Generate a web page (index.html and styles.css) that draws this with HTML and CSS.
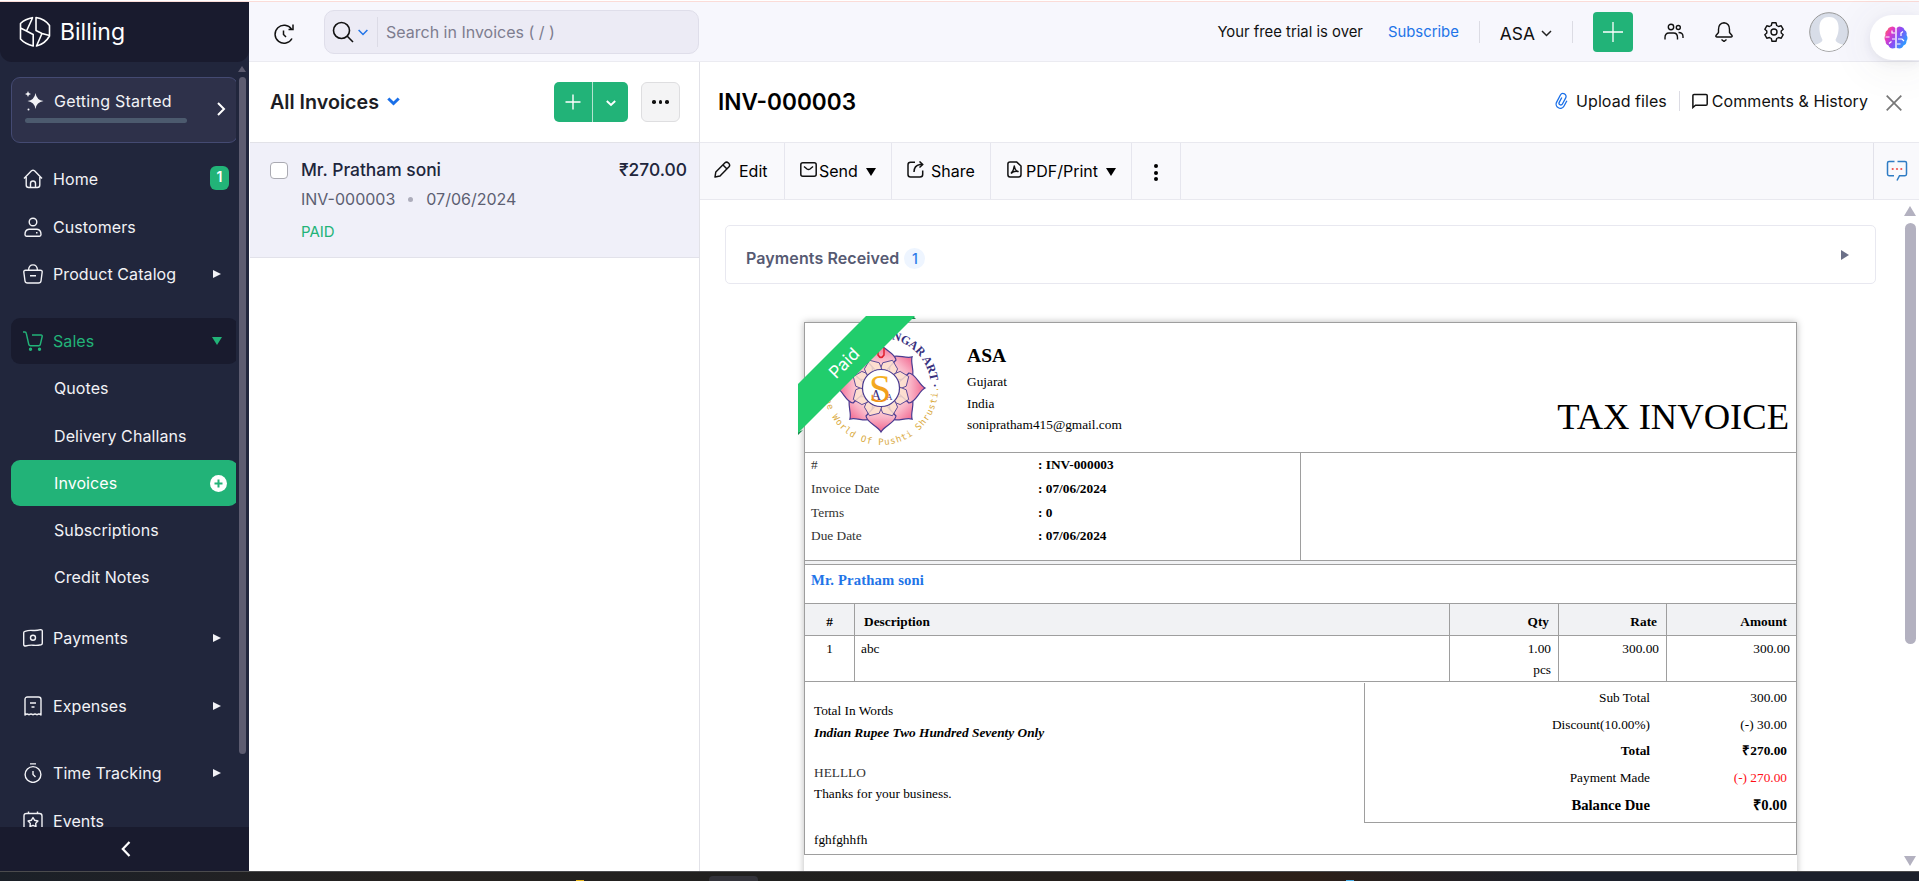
FILE: index.html
```html
<!DOCTYPE html>
<html lang="en">
<head>
<meta charset="utf-8">
<title>Billing - Invoices</title>
<link rel="stylesheet" href="styles.css">
</head>
<body>
<div class="topline"></div>
<div class="app">
  <aside class="sidebar">
    <div class="brand">
      <svg width="32" height="32" viewBox="0 0 32 32" fill="none" stroke="#fff" stroke-width="1.6" stroke-linejoin="round"><path d="M14.200 1.500 Q6 3 1.500 7.500 V23 Q6 28 14.200 30 V18.500 L7.500 15 L13.500 2 M1.500 12 L7.500 15"/><path d="M17 1.500 Q26 3 30.500 9.500 V20 Q26 28 17.500 30 L23 17.500 L17 14.500 Z M23 17.500 L30.500 19.500"/></svg>
      <span>Billing</span>
    </div>
    <div class="nav-wrap">
      <nav class="nav">
        <div class="start-card">
          <svg width="20" height="20" viewBox="0 0 20 20" fill="#f2f2f6"><path d="M10.500 2 Q11.500 9 18.500 10 Q11.500 11 10.500 18 Q9.500 11 2.500 10 Q9.500 9 10.500 2Z"/><path d="M3 0 Q3.300 2.700 6 3 Q3.300 3.300 3 6 Q2.700 3.300 0 3 Q2.700 2.700 3 0Z"/><circle cx="3.500" cy="18.500" r="1"/></svg>
          <div class="start-main"><span>Getting Started</span></div>
          <svg class="start-arrow" width="10" height="14" viewBox="0 0 10 14" fill="none" stroke="#fff" stroke-width="2"><path d="M2 1 L8 7 L2 13"/></svg>
          <div class="progress"></div>
        </div>
        <a class="item g13"><svg viewBox="0 0 20 20"><path d="M1 9.500 L8.500 1.800 Q10 .700 11.500 1.800 L19 9.500 M3.200 8 V16 Q3.200 18.500 5.700 18.500 H14.300 Q16.800 18.500 16.800 16 V8 M7.500 18.500 V14.500 Q7.500 12 10 12 Q12.500 12 12.500 14.500 V18.500"/></svg>Home<b class="count">1</b></a>
        <a class="item g2"><svg viewBox="0 0 20 20"><circle cx="10" cy="5" r="3.800"/><path d="M6 12.200 H14 Q18 12.500 18 17.500 Q18 19.200 16.500 19.200 H3.500 Q2 19.200 2 17.500 Q2 12.500 6 12.200Z M13 15.800 H14.500"/></svg>Customers</a>
        <a class="item g1"><svg viewBox="0 0 20 20"><path d="M2.500 6.200 H17.500 Q19.300 6.200 19.200 8 L18 17 Q17.700 19 15.500 19 H4.500 Q2.300 19 2 17 L.800 8 Q.700 6.200 2.500 6.200Z M5.500 6 Q6 .900 10 .900 Q14 .900 14.500 6 M7 11.800 H13"/></svg>Product Catalog<i class="tri"></i></a>
        <a class="item open g21"><svg viewBox="0 0 20 20"><path d="M0 1 H2 Q3 1 3.300 2.500 L5.800 13.500 Q6.100 14.700 7.500 14.700 H15.800 Q17 14.700 17.300 13.500 L19.200 5.500 Q19.400 4 18 4 H9"/><circle cx="7.500" cy="18.200" r="1" fill="currentColor"/><circle cx="16.500" cy="18.200" r="1" fill="currentColor"/></svg>Sales<i class="tri down"></i></a>
        <a class="item sub g1">Quotes</a>
        <a class="item sub g2">Delivery Challans</a>
        <a class="item sub active g1">Invoices<svg class="add" viewBox="0 0 17 17"><circle cx="8.500" cy="8.500" r="8.500" fill="#fff" stroke="none"/><path d="M8.500 4.500 V12.500 M4.500 8.500 H12.500" stroke="#22b378" stroke-width="2"/></svg></a>
        <a class="item sub g1">Subscriptions</a>
        <a class="item sub g1">Credit Notes</a>
        <a class="item g15"><svg viewBox="0 0 20 20"><path d="M2 3.300 Q6 2 10 2.500 Q14 2.800 17.500 1.700 Q19.300 1.500 19.300 3.200 V15.300 Q19.300 16.500 18 16.800 Q14 17.600 10 17.200 Q6 17 2.500 18 Q.700 18 .700 16.500 V4.800 Q.700 3.700 2 3.300Z"/><circle cx="10" cy="9.800" r="2.500"/></svg>Payments<i class="tri"></i></a>
        <a class="item g22"><svg viewBox="0 0 20 20"><path d="M2 19 V3.500 Q2 1 4.500 1 H15.500 Q18 1 18 3.500 V19 Q16 17 14 18.800 Q12 17 10 18.800 Q8 17 6 18.800 Q4 17 2 19Z M7 7 H13 M8.500 11 H11.500"/></svg>Expenses<i class="tri"></i></a>
        <a class="item g21"><svg viewBox="0 0 20 20"><circle cx="10" cy="11.500" r="7.900"/><path d="M7 .900 H13 M10 8 V11.500 L12.500 14"/></svg>Time Tracking<i class="tri"></i></a>
        <a class="item g2"><svg viewBox="0 0 20 20"><path d="M3.500 2.500 H16.500 Q19 2.500 19 5 V17 Q19 19 16.500 19 H3.500 Q1 19 1 17 V5 Q1 2.500 3.500 2.500Z M5.500 .500 V3 M14.500 .500 V3 M10 6.500 L11.700 9.300 L14.900 10 L12.700 12.400 L13 15.600 L10 14.300 L7 15.600 L7.300 12.400 L5.100 10 L8.300 9.300Z"/></svg>Events</a>
      </nav>
      <div class="side-scroll"><i class="side-up"></i><i class="side-thumb"></i></div>
    </div>
    <div class="collapse"><svg width="10" height="16" viewBox="0 0 10 16" fill="none" stroke="#fff" stroke-width="2.200"><path d="M8.500 1 L1.800 8 L8.500 15"/></svg></div>
  </aside>

  <div class="main">
    <header class="header">
      <svg class="recent" width="22" height="22" viewBox="0 0 22 22" fill="none" stroke="#111" stroke-width="1.500"><path d="M19 15.500 A9 9 0 1 1 18.500 6.200 M20 1.500 V6.500 H15.500 M10.500 7.500 V11.500 L13 14"/></svg>
      <div class="search">
        <svg width="22" height="22" viewBox="0 0 22 22" fill="none" stroke="#111" stroke-width="1.600"><circle cx="9.500" cy="9.500" r="8"/><path d="M15.300 15.300 L21 21"/></svg>
        <svg class="s-chev" width="10" height="7" viewBox="0 0 10 7" fill="none" stroke="#2274e8" stroke-width="1.500"><path d="M.600 1 L5 5.500 L9.400 1"/></svg>
        <span class="search-text">Search in Invoices ( / )</span>
      </div>
      <div class="head-right">
        <span class="trial">Your free trial is over</span>
        <a class="subscribe">Subscribe</a>
        <i class="vr"></i>
        <span class="org">ASA<svg width="11" height="7" viewBox="0 0 11 7" fill="none" stroke="#222" stroke-width="1.500"><path d="M1 1 L5.500 5.500 L10 1"/></svg></span>
        <i class="vr"></i>
        <span class="plus-btn"><svg width="20" height="20" viewBox="0 0 20 20" stroke="#fff" stroke-width="1.300"><path d="M10 0 V20 M0 10 H20"/></svg></span>
        <svg class="hi users" viewBox="0 0 20 20"><circle cx="7" cy="5" r="2.700"/><circle cx="14.300" cy="5.500" r="2"/><path d="M1 17.500 V15.500 Q1 11 5 11 H9.500 Q13.500 11 13.500 15.500 V17.500 M14.500 10.500 Q19 10.500 19 14.500 V16"/></svg>
        <svg class="hi bell" viewBox="0 0 20 20"><path d="M10 .800 Q15.500 1.300 15.500 7.500 V10.500 L18 13.500 Q18.500 15 17 15 H3 Q1.500 15 2 13.500 L4.500 10.500 V7.500 Q4.500 1.300 10 .800Z M7.500 17.500 L10 19.500 L12.500 17.500"/></svg>
        <svg class="hi gear" viewBox="0 0 20 20"><path d="M8 .800 H12 L12.700 3.500 L14.500 4.500 L17.200 3.800 L19.200 7.300 L17.200 9 V11 L19.200 12.700 L17.200 16.200 L14.500 15.500 L12.700 16.500 L12 19.200 H8 L7.300 16.500 L5.500 15.500 L2.800 16.200 L.800 12.700 L2.800 11 V9 L.800 7.300 L2.800 3.800 L5.500 4.500 L7.300 3.500Z"/><circle cx="10" cy="10" r="3"/></svg>
        <svg class="avatar" width="40" height="40" viewBox="0 0 40 40"><defs><clipPath id="av"><circle cx="20" cy="20" r="19"/></clipPath></defs><circle cx="20" cy="20" r="19.300" fill="#d8dde8" stroke="#999" stroke-width="1"/><path clip-path="url(#av)" fill="#fff" d="M20 5 C28 5 30 11 29.500 18 C29 24 27 26 26.500 28 Q27 31 35 33 V40 H5 V33 Q13 31 13.500 28 C13 26 11 24 10.500 18 C10 11 12 5 20 5Z"/></svg>
      </div>
    </header>

    <div class="body">
      <section class="list">
        <div class="list-head">
          <h2>All Invoices</h2>
          <svg class="lh-chev" width="13" height="9" viewBox="0 0 13 9" fill="none" stroke="#1a6fe8" stroke-width="3"><path d="M1.300 1.500 L6.500 6.500 L11.700 1.500"/></svg>
          <div class="split"><span class="sp-a"><svg width="16" height="16" viewBox="0 0 16 16" stroke="#fff" stroke-width="1.400"><path d="M8 .500 V15.500 M.500 8 H15.500"/></svg></span><span class="sp-b"><svg width="10" height="7" viewBox="0 0 10 7" fill="none" stroke="#fff" stroke-width="1.900"><path d="M.800 1 L5 5 L9.200 1"/></svg></span></div>
          <span class="more"><i></i><i></i><i></i></span>
        </div>
        <div class="row">
          <i class="check"></i>
          <div class="row-main">
            <div class="r1"><span>Mr. Pratham soni</span><span>₹270.00</span></div>
            <div class="r2"><span>INV-000003</span><i></i><span>07/06/2024</span></div>
            <div class="r3">PAID</div>
          </div>
        </div>
      </section>

      <section class="detail">
        <div class="d-head">
          <h1>INV-000003</h1>
          <div class="d-links">
            <svg width="14" height="18" viewBox="0 0 14 18" fill="none" stroke="#1a6fe8" stroke-width="1.300"><g transform="rotate(28 7 9)"><path d="M5.200 6 V11.500 A1.800 1.800 0 0 0 8.800 11.500 V4.500 A3 3 0 0 0 2.800 4.500 V12.500 A4.200 4.200 0 0 0 11.200 12.500 V6.500"/></g></svg>
            <span class="up">Upload files</span>
            <i class="vr2"></i>
            <svg class="cm" width="16" height="16" viewBox="0 0 16 16" fill="none" stroke="#111" stroke-width="1.500"><path d="M.900 14.500 V2.500 Q.900 1.500 2 1.500 H14 Q15.200 1.500 15.200 2.500 V11 Q15.200 12.300 14 12.300 H3.500Z"/></svg>
            <span class="ch">Comments &amp; History</span>
            <svg class="close" width="16" height="16" viewBox="0 0 16 16" stroke="#777" stroke-width="1.700"><path d="M.700 .700 L15.300 15.300 M15.300 .700 L.700 15.300"/></svg>
          </div>
        </div>
        <div class="toolbar">
          <span class="tb t-edit"><svg width="17" height="17" viewBox="0 0 17 17"><path d="M1 16 L1.800 11 L11 1.800 Q12.500 .300 14.500 2 Q16.500 4 15 5.800 L6 15 Z M9 4 L13 8"/></svg>Edit</span>
          <span class="tb t-send"><svg width="17" height="15" viewBox="0 0 17 15"><rect x=".8" y=".8" width="15.400" height="13.400" rx="2"/><path d="M4 4.500 L7 7 Q8.500 8 10 7 L13 4.500"/></svg>Send<i class="dn"></i></span>
          <span class="tb t-share"><svg width="17" height="17" viewBox="0 0 17 17"><path d="M8 1.200 H3.500 Q1 1.200 1 3.700 V13.500 Q1 16 3.500 16 H13 Q15.700 16 15.700 13.500 V9.500 M7 11 Q7 4.500 13 3.500 H15.500 M12.500 .500 L15.800 3.500 L12.500 6.500"/></svg>Share</span>
          <span class="tb t-pdf"><svg width="15" height="17" viewBox="0 0 15 17"><path d="M3 .900 H9.500 L14 5 V13.500 Q14 16 11.500 16 H3 Q.900 16 .900 13.500 V3 Q.900 .900 3 .900Z M4 12.500 Q7 9 7.300 5 Q8 9.500 11 10.500 Q7 9.500 4 12.500"/></svg>PDF/Print<i class="dn"></i></span>
          <span class="tb t-more"><i></i><i></i><i></i></span>
          <span class="t-chat"><svg width="22" height="22" viewBox="0 0 22 22" fill="none" stroke="#2f7cc4" stroke-width="1.500"><path d="M8.500 1.500 H3 Q1.500 1.500 1.500 3 V14 Q1.500 15.700 3 15.700 H8 M11.500 1.500 H19 Q20.500 1.500 20.500 3 V14 Q20.500 15.700 19 15.700 H13.500 L11 20.500"/><g fill="#f0524f" stroke="none"><circle cx="6.700" cy="9" r="1.100"/><circle cx="11" cy="9" r="1.100"/><circle cx="15.300" cy="9" r="1.100"/></g></svg></span>
        </div>
        <div class="view">
          <div class="view-main">
            <div class="pay"><span>Payments Received</span><b>1</b><i></i></div>
            <div class="paper">
              <div class="inv">
                <div class="inv-top">
                  <svg class="logo" width="124" height="124" viewBox="-62 -62 124 124">
                    <defs>
                      <linearGradient id="pk" x1="0" y1="0" x2="0" y2="1"><stop offset="0" stop-color="#f2668f"/><stop offset=".55" stop-color="#f9b3c6"/><stop offset="1" stop-color="#fde4dc"/></linearGradient>
                      <linearGradient id="gd" x1="0" y1="0" x2="0" y2="1"><stop offset="0" stop-color="#f7c22a"/><stop offset="1" stop-color="#ee8412"/></linearGradient>
                      <path id="petal" d="M0 -44 C-3 -38 -14 -35 -15 -28 Q-11 -24 -6 -18 H6 Q11 -24 15 -28 C14 -35 3 -38 0 -44Z" fill="url(#pk)" stroke="#4a3a90" stroke-width="1.200"/>
                      <path id="inner" d="M0 -30 L-8 -24 L-8 -17 H8 L8 -24Z" fill="#fde0cf" fill-opacity=".85" stroke="#4a3a90" stroke-width=".8"/>
                      <path id="arc1" d="M-50 0 A50 50 0 0 1 50 0 A50 50 0 0 1 43.300 25"/>
                      <path id="arc2" d="M-57 0 A57 57 0 0 0 57 0 A57 57 0 0 0 55 -15"/>
                    </defs>
                    <use href="#petal" transform="rotate(45)"/><use href="#petal" transform="rotate(135)"/><use href="#petal" transform="rotate(225)"/><use href="#petal" transform="rotate(315)"/>
                    <use href="#petal"/><use href="#petal" transform="rotate(90)"/><use href="#petal" transform="rotate(180)"/><use href="#petal" transform="rotate(270)"/>
                    <use href="#inner" transform="rotate(22.500)"/><use href="#inner" transform="rotate(67.500)"/><use href="#inner" transform="rotate(112.500)"/><use href="#inner" transform="rotate(157.500)"/><use href="#inner" transform="rotate(202.500)"/><use href="#inner" transform="rotate(247.500)"/><use href="#inner" transform="rotate(292.500)"/><use href="#inner" transform="rotate(337.500)"/>
                    <path d="M-3 -40 V-33 Q0 -28 3 -33 V-40" fill="none" stroke="#e01f2d" stroke-width="1.500"/>
                    <circle r="18.500" fill="#fff" stroke="#4a3a90" stroke-width="1.200"/>
                    <text class="lg-a" x="-5" y="12" font-size="14">A</text><text class="lg-a" x="5" y="12" font-size="9">A</text>
                    <text class="lg-s" x="-1" y="14" font-size="40" fill="url(#gd)">S</text>
                    <text class="lg-top"><textPath href="#arc1" startOffset="89">NGAR ART ·</textPath></text>
                    <text class="lg-bot"><textPath href="#arc2" startOffset="5">The World Of Pushti Shrusti.</textPath></text>
                  </svg>
                  <div class="org-info"><b>ASA</b><span>Gujarat</span><span>India</span><span>sonipratham415@gmail.com</span></div>
                  <div class="tax">TAX INVOICE</div>
                </div>
                <div class="meta">
                  <div class="meta-l">
                    <span>#</span><b>: INV-000003</b>
                    <span>Invoice Date</span><b>: 07/06/2024</b>
                    <span>Terms</span><b>: 0</b>
                    <span>Due Date</span><b>: 07/06/2024</b>
                  </div>
                </div>
                <div class="gap"></div>
                <div class="cust">Mr. Pratham soni</div>
                <div class="cols thead"><span class="c">#</span><span class="l">Description</span><span>Qty</span><span>Rate</span><span>Amount</span></div>
                <div class="cols tbody"><span class="c">1</span><span class="l">abc</span><span>1.00<br>pcs</span><span>300.00</span><span>300.00</span></div>
                <div class="bottom">
                  <div class="notes">
                    <p>Total In Words</p><p class="words">Indian Rupee Two Hundred Seventy Only</p>
                    <p class="hello">HELLLO</p><p>Thanks for your business.</p><p class="terms">fghfghhfh</p>
                  </div>
                  <div class="totals">
                    <span>Sub Total</span><span>300.00</span>
                    <span>Discount(10.00%)</span><span>(-) 30.00</span>
                    <b>Total</b><b>₹270.00</b>
                    <span>Payment Made</span><span class="red">(-) 270.00</span>
                    <b class="big">Balance Due</b><b class="big">₹0.00</b>
                  </div>
                </div>
              </div>
              <div class="ribbon"><svg width="120" height="120" viewBox="0 0 120 120"><path d="M115 0 L118 3 H112Z M0 116 L0 119 L5 114Z" fill="#16894a"/><path d="M68 0 H117 L0 117 V68Z" fill="#21cd6c"/><text x="46" y="53" transform="rotate(-45 46 47)">Paid</text></svg></div>
            </div>
          </div>
          <div class="v-scroll"><i class="v-up"></i><i class="v-thumb"></i><i class="v-down"></i></div>
        </div>
      </section>
    </div>
    <div class="float"><svg width="24" height="23" viewBox="0 0 24 23"><defs><linearGradient id="br" x1="0" y1="0" x2="1" y2=".6"><stop offset="0" stop-color="#ff7a3c"/><stop offset=".3" stop-color="#e838c0"/><stop offset=".6" stop-color="#8a4df5"/><stop offset="1" stop-color="#2f9bff"/></linearGradient></defs><path fill="url(#br)" d="M11.300 2 Q9.500 -.500 6.500 1 Q4 1.500 3.500 4 Q.500 5.500 1.500 9 Q-.500 12 1.500 15 Q1.500 18.500 4.500 19.500 Q6 23.500 11.300 22Z M12.700 2 Q14.500 -.500 17.500 1 Q20 1.500 20.500 4 Q23.500 5.500 22.500 9 Q24.500 12 22.500 15 Q22.500 18.500 19.500 19.500 Q18 23.500 12.700 22Z"/><path d="M11 7 H8 V4.500 M1.500 11 H5.500 M11 13 H8 M5 17.500 L7.500 15.500 M14 13 H18 L20 15 M16.500 7.500 L19 5.500 M13 18 H16.500 M17 7.500 V10" fill="none" stroke="#fff" stroke-width="1.200"/></svg></div>
  </div>
</div>
<div class="taskbar"><i class="tk y"></i><i class="tab"></i><i class="tk b"></i></div>
</body>
</html>
```

FILE: styles.css
```css
* { box-sizing: border-box; }
body { margin: 0; width: 1919px; height: 881px; overflow: hidden; display: flex; flex-direction: column; background: #fff; font-family: Inter, "Liberation Sans", sans-serif; font-size: 16px; color: #111; }
h1, h2, p { margin: 0; }
i { font-style: normal; }
svg { flex: none; display: block; }
.topline { height: 2px; flex: none; background: linear-gradient(#fff 1px, #fbdcd8 1px); }
.app { display: flex; height: 869px; flex: none; }

/* sidebar */
.sidebar { width: 249px; flex: none; background: #21263c; display: flex; flex-direction: column; }
.brand { height: 60px; flex: none; background: #191b2e; border-radius: 0 0 12px 12px; display: flex; align-items: center; gap: 9px; padding: 0 0 0 19px; color: #fff; font-size: 23px; }
.nav-wrap { flex: 1; min-height: 0; display: flex; justify-content: space-between; }
.nav { width: 236px; padding: 15px 0 0 11px; overflow: hidden; height: 765px; letter-spacing: .08px; }
.start-card { width: 227px; height: 66px; border: 1px solid #444a72; border-radius: 9px; background: #2e314a; display: grid; grid-template-columns: 20px 1fr 10px; column-gap: 10px; padding: 13px 11px 0 13px; color: #f2f2f6; align-content: start; }
.start-main { height: 20px; line-height: 20px; margin-left: -1px; letter-spacing: .25px; white-space: nowrap; }
.start-arrow { margin-top: 11px; }
.progress { grid-column: 1 / 4; width: 162px; height: 5px; border-radius: 3px; background: #4c5a6e; margin-top: 2px; }
.item { width: 227px; height: 46px; display: flex; align-items: center; padding-left: 12px; color: #f2f2f6; border-radius: 9px; }
.item svg { width: 20px; height: 20px; margin-right: 10px; fill: none; stroke: currentColor; stroke-width: 1.4; stroke-linejoin: round; }
.item.open { background: #191b2e; color: #22b378; }
.item.sub { padding-left: 43px; }
.item.active { background: #22b378; color: #fff; }
.item svg.add { width: 17px; height: 17px; margin: 0 11px 0 auto; }
.g1 { margin-top: 1px; } .g2 { margin-top: 2px; } .g13 { margin-top: 13px; } .g15 { margin-top: 15px; } .g21 { margin-top: 21px; } .g22 { margin-top: 22px; }
.count { margin: -2px 9px 0 auto; width: 19px; height: 24px; border-radius: 6px; background: #22b378; color: #fff; font-size: 14px; font-weight: 600; text-align: center; line-height: 22px; }
.tri { margin: 0 17px 0 auto; border-left: 8px solid #f2f2f6; border-top: 4.5px solid transparent; border-bottom: 4.5px solid transparent; }
.tri.down { margin-right: 16px; border-left: 5px solid transparent; border-right: 5px solid transparent; border-top: 8px solid #22b378; border-bottom: 0; }
.side-scroll { width: 11px; padding-top: 4px; display: flex; flex-direction: column; align-items: flex-start; }
.side-up { border-left: 4.5px solid transparent; border-right: 4.5px solid transparent; border-bottom: 6px solid #5d5c70; }
.side-thumb { width: 7px; height: 677px; margin: 5px 0 0 1px; border-radius: 4px; background: #5d5c70; }
.collapse { height: 44px; flex: none; background: #191b2e; display: flex; align-items: center; justify-content: center; padding-left: 3px; }

/* header */
.main { flex: 1; min-width: 0; position: relative; display: flex; flex-direction: column; padding-left: 1px; }
.header { height: 60px; flex: none; margin-left: -1px; background: #f7f7fd; border-bottom: 1px solid #ebebf1; display: flex; align-items: center; }
.recent { margin: 4px 0 0 24px; }
.search { width: 375px; height: 44px; margin-left: 29px; margin-top: 1px; border: 1px solid #dfdeea; border-radius: 10px; background: #ecebf5; display: flex; align-items: center; padding-left: 7px; }
.s-chev { margin: 0 9px 0 4px; }
.search-text { height: 30px; line-height: 30px; border-left: 1px solid #dcdbe6; padding-left: 8px; color: #7e7d8f; }
.head-right { margin-left: auto; padding-right: 70px; display: flex; align-items: center; font-size: 14.850px; white-space: nowrap; }
.trial { margin-right: 25px; }
.subscribe { color: #2274e8; margin-right: 20px; }
.vr { width: 1px; height: 22px; background: #dcdce4; margin-right: 20px; }
.org { font-size: 17.400px; display: flex; align-items: center; gap: 6px; margin: 4px 20px 0 0; }
.plus-btn { width: 40px; height: 40px; border-radius: 4px; background: #22b378; display: flex; align-items: center; justify-content: center; margin-right: 31px; }
.hi { width: 20px; height: 20px; fill: none; stroke: #111; stroke-width: 1.4; stroke-linejoin: round; margin-right: 30px; }
.gear { margin-right: 25px; }
.float { position: absolute; right: 0; top: 13px; width: 49px; height: 45px; border-radius: 22px 0 0 22px; background: #fff; box-shadow: 0 4px 40px 8px rgba(60,60,90,.06), 0 3px 10px rgba(60,60,90,.08); padding: 11px 0 0 14px; }

.body { flex: 1; min-height: 0; display: flex; }
/* list */
.list { width: 450px; flex: none; border-right: 1px solid #e2e2e8; }
.list-head { height: 81px; border-bottom: 1px solid #e2e2e8; display: flex; align-items: center; padding-left: 20px; }
h2 { font-size: 19.700px; font-weight: 600; color: #1c1d24; white-space: nowrap; margin-top: -1px; }
.lh-chev { margin: -1px 0 0 8px; }
.split { margin-left: auto; display: flex; width: 74px; height: 40px; border-radius: 5px; background: #22b378; }
.sp-a, .sp-b { display: flex; align-items: center; justify-content: center; }
.sp-a { width: 39px; border-right: 1px solid #b4e3d0; }
.sp-b { flex: 1; padding-top: 2px; }
.more { width: 39px; height: 40px; margin: 0 19px 0 13px; border: 1px solid #dedee0; border-radius: 6px; background: #f4f4f5; display: flex; align-items: center; justify-content: center; gap: 3px; }
.more i { width: 3.500px; height: 3.500px; border-radius: 50%; background: #111; }
.row { height: 115px; background: #f0f0f9; border-bottom: 1px solid #e2e2ea; display: flex; padding: 16px 12px 0 20px; }
.check { width: 18px; height: 17px; margin-top: 3px; border: 1px solid #aaaab2; border-radius: 4px; background: #fff; }
.row-main { flex: 1; margin-left: 13px; }
.r1 { display: flex; justify-content: space-between; font-size: 17.400px; font-weight: 500; line-height: 22px; color: #21263c; }
.r2 { display: flex; align-items: center; line-height: 20px; margin-top: 8px; color: #5c5f72; }
.r2 i { width: 5px; height: 5px; border-radius: 50%; background: #adadbb; margin: 0 13px; }
.r3 { font-size: 15px; line-height: 20px; margin-top: 13px; color: #22b378; }

/* detail */
.detail { flex: 1; min-width: 0; display: flex; flex-direction: column; }
.d-head { height: 80px; flex: none; display: flex; align-items: center; justify-content: space-between; padding: 0 17px 2px 18px; }
h1 { font-size: 22.600px; font-weight: 600; color: #000; }
.d-links { display: flex; align-items: center; white-space: nowrap; letter-spacing: .06px; }
.up { margin: 0 12px 0 7px; }
.vr2 { width: 1px; height: 20px; background: #dcdce4; }
.cm { margin: 0 4px 0 12px; }
.close { margin-left: 18px; margin-top: 3px; }
.toolbar { height: 58px; flex: none; border-top: 1px solid #e9e9ef; border-bottom: 1px solid #e9e9ef; background: #f9f9fc; display: flex; }
.tb { border-right: 1px solid #e6e6ee; display: flex; align-items: center; color: #000; }
.tb svg { fill: none; stroke: #111; stroke-width: 1.5; stroke-linejoin: round; margin-top: -3px; }
.t-edit { width: 85px; padding-left: 14px; } .t-edit svg { margin-right: 8px; }
.t-send { width: 107px; padding-left: 15px; } .t-send svg { margin-right: 2px; }
.t-share { width: 99px; padding-left: 15px; } .t-share svg { margin-right: 7px; }
.t-pdf { width: 141px; padding-left: 16px; } .t-pdf svg { margin-right: 4px; }
.t-more { width: 49px; flex-direction: column; justify-content: center; gap: 2.500px; padding-top: 3px; }
.t-more i { width: 4px; height: 4px; border-radius: 50%; background: #000; }
.dn { border-left: 5px solid transparent; border-right: 5px solid transparent; border-top: 8px solid #000; margin: 1px 0 0 8px; }
.t-chat { margin-left: auto; width: 46px; border-left: 1px solid #e2e2ea; display: flex; align-items: center; justify-content: center; }
.view { flex: 1; min-height: 0; display: flex; overflow: hidden; justify-content: space-between; padding-left: 25px; }
.view-main { width: 1151px; padding-top: 25px; }
.pay { height: 59px; border: 1px solid #e8e8f0; border-radius: 5px; display: flex; align-items: center; padding: 6px 26px 0 20px; font-weight: 600; color: #565a72; white-space: nowrap; letter-spacing: .1px; }
.pay b { width: 21px; height: 21px; margin: 2px 0 0 5px; border-radius: 50%; background: #eef5ff; color: #2b7be9; font-weight: 500; font-size: 14px; text-align: center; line-height: 21px; }
.pay i { margin: -9px 0 0 auto; border-left: 8px solid #6b7088; border-top: 5px solid transparent; border-bottom: 5px solid transparent; position: relative; top: 2px; }
.paper { position: relative; margin: 38px 0 0 79px; width: 993px; height: 620px; background: #fff; box-shadow: 0 0 7px rgba(0,0,0,.28); font-family: "Liberation Serif", "Times New Roman", serif; font-size: 13.330px; color: #000; }
.inv { border: 1px solid #9e9e9e; height: 533px; }
.inv-top { height: 130px; border-bottom: 1px solid #9e9e9e; display: flex; }
.logo { margin: 3px 0 0 14px; overflow: visible; }
.lg-a { font-family: "Liberation Serif", serif; fill: #3b3181; text-anchor: middle; }
.lg-a + .lg-a { text-anchor: start; }
.lg-s { font-family: "Liberation Serif", serif; text-anchor: middle; }
.lg-top { font: bold 12px "Liberation Serif", serif; fill: #38307e; letter-spacing: -.2px; }
.lg-bot { font: 9px "DejaVu Sans Mono", monospace; fill: #d9a93c; letter-spacing: .85px; }
.org-info { display: flex; flex-direction: column; margin: 20px 0 0 24px; line-height: 21.500px; }
.org-info b { font-size: 19.600px; line-height: 26px; margin-bottom: 2px; }
.tax { margin: 70px 7px 0 auto; font-size: 36.600px; line-height: 48px; white-space: nowrap; }
.meta { height: 108px; border-bottom: 1px solid #9e9e9e; }
.meta-l { width: 496px; height: 107px; border-right: 1px solid #9e9e9e; display: grid; grid-template-columns: 227px 1fr; grid-auto-rows: 23.800px; align-content: start; line-height: 24px; padding-left: 6px; color: #333; }
.meta-l b { color: #000; }
.gap { height: 4px; border-bottom: 1px solid #9e9e9e; background: #f1f2f4; }
.cust { height: 39px; border-bottom: 1px solid #9e9e9e; padding: 4px 6px; font-size: 14.670px; letter-spacing: .15px; line-height: 23px; font-weight: bold; color: #2274e8; }
.cols { display: grid; grid-template-columns: 50px 595px 109px 108px 1fr; border-bottom: 1px solid #9e9e9e; text-align: right; }
.cols span { border-right: 1px solid #9e9e9e; padding-right: 6px; }
.cols span:last-child { border-right: 0; padding-right: 6px; }
.cols span.c { text-align: center; padding: 0; }
.cols span.l { text-align: left; padding-left: 6px; }
.thead { height: 32px; background: #f1f2f4; font-weight: bold; line-height: 36px; }
.thead span { padding-right: 9px; height: 31px; }
.thead span:last-child { padding-right: 9px; }
.thead span.l { padding-left: 9px; }
.thead span.c { padding: 0; }
.tbody { height: 46px; line-height: 21px; }
.tbody span { padding-top: 2px; padding-right: 7px; }
.tbody span.c { padding-top: 2px; }
.bottom { display: flex; justify-content: space-between; }
.notes { padding: 18px 0 0 9px; line-height: 22px; }
.words { font-weight: bold; font-style: italic; }
.hello { margin-top: 18px; color: #333; line-height: 21px; }
.terms { margin-top: 24px; }
.totals { width: 432px; height: 140px; margin-top: 1px; border-left: 1px solid #9e9e9e; border-bottom: 1px solid #9e9e9e; display: grid; grid-template-columns: 1fr 137px; grid-auto-rows: 26.500px; align-content: start; padding: 2px 9px 0 0; text-align: right; line-height: 26px; }
.totals .red { color: #ff1018; }
.totals .big { font-size: 14.670px; line-height: 29px; }
.ribbon { position: absolute; left: -6px; top: -6px; }
.ribbon text { font: 17px Inter, sans-serif; fill: #fff; text-anchor: middle; }
.v-scroll { width: 15px; padding-top: 6px; display: flex; flex-direction: column; align-items: flex-start; }
.v-up { border-left: 6.500px solid transparent; border-right: 6.500px solid transparent; border-bottom: 10px solid #b3b1c0; }
.v-thumb { width: 11px; height: 421px; margin: 7px 0 0 1px; border-radius: 6px; background: #b3b1c0; }
.v-down { margin-top: 212px; border-left: 6px solid transparent; border-right: 6px solid transparent; border-top: 10px solid #b3b1c0; }

.taskbar { height: 10px; flex: none; border-top: 1px solid #4b4b4d; background: linear-gradient(90deg, #1b2028, #26221f 22%, #20201f 40%, #241f1c 55%, #2c1f18 68%, #1c202b 82%, #1c202b); display: flex; align-items: flex-end; }
.tk { width: 8px; height: 1px; }
.tk.y { background: #e8b71c; margin-left: 576px; }
.tab { width: 49px; height: 5px; margin-left: 125px; border-radius: 4px 4px 0 0; background: #33333a; }
.tk.b { background: #4ab0e8; margin-left: 588px; }
```
